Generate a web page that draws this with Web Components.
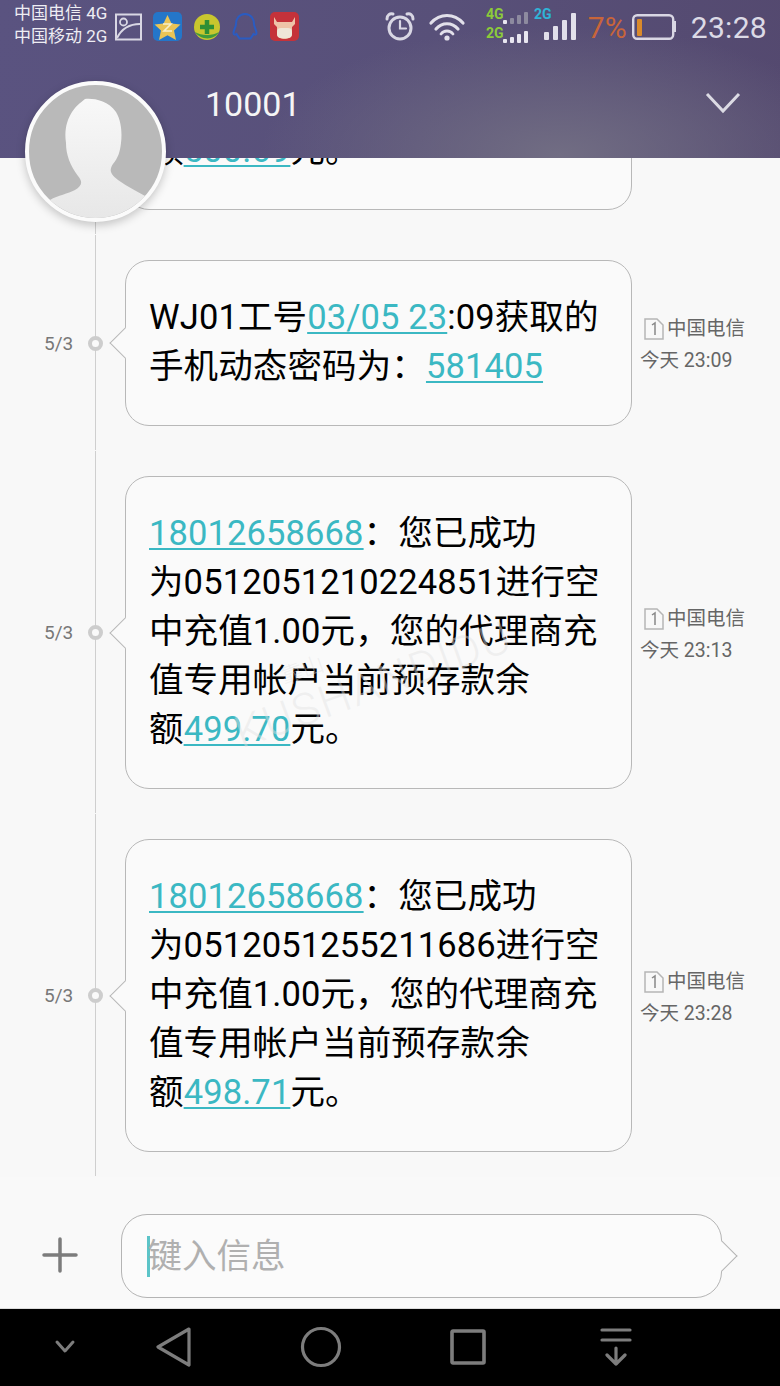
<!DOCTYPE html>
<html lang="zh-CN">
<head>
<meta charset="utf-8">
<title>10001</title>
<style>
html,body{margin:0;padding:0;background:#f8f8f8}
body{font-family:Roboto,"Noto Sans CJK SC",sans-serif}
</style>
</head>
<body>
<phone-app>
  <sms-header title-text="10001"></sms-header>
  <sms-thread>
    <sms-row partial><sms-bubble>额<sms-link>500.69</sms-link>元。</sms-bubble></sms-row>
    <sms-row date="5/3" time="今天 23:09"><sms-bubble>WJ01工号<sms-link>03/05 23</sms-link>:09获取的<br>手机动态密码为：<sms-link>581405</sms-link></sms-bubble></sms-row>
    <sms-row date="5/3" time="今天 23:13"><sms-bubble><sms-link>18012658668</sms-link>：您已成功<br>为0512051210224851进行空<br>中充值1.00元，您的代理商充<br>值专用帐户当前预存款余<br>额<sms-link>499.70</sms-link>元。</sms-bubble></sms-row>
    <sms-row date="5/3" time="今天 23:28"><sms-bubble><sms-link>18012658668</sms-link>：您已成功<br>为0512051255211686进行空<br>中充值1.00元，您的代理商充<br>值专用帐户当前预存款余<br>额<sms-link>498.71</sms-link>元。</sms-bubble></sms-row>
  </sms-thread>
  <composer-bar placeholder="键入信息"></composer-bar>
  <nav-bar></nav-bar>
  <contact-avatar></contact-avatar>
  <water-mark></water-mark>
</phone-app>
<script>
const FONT = 'Roboto,"Noto Sans CJK SC",sans-serif';
function def(name, html, init){
  customElements.define(name, class extends HTMLElement{
    constructor(){
      super();
      const r = this.attachShadow({mode:'open'});
      r.innerHTML = html;
    }
    connectedCallback(){ if(init) init(this, this.shadowRoot); }
  });
}

def('phone-app', `<style>
:host{display:flex;flex-direction:column;position:relative;width:780px;height:1386px;overflow:hidden;background:#f8f8f8;font-family:${FONT}}
</style><slot></slot>`);

def('status-bar', `<style>
:host{display:flex;height:52px;align-items:flex-start;color:#e8e6f0}
svg{display:block;flex:none}
.car{margin:2px 0 0 14px;width:94px;font-size:17px;line-height:23px;white-space:nowrap;color:#eeedf3}
.r{margin-left:auto;display:flex;align-items:flex-start}
.pct{font-size:30px;line-height:56px;color:#c8653a;width:44px;margin-left:2px;}
.time{font-size:30px;line-height:56px;color:#dcdae6;margin:0 13px 0 15px;letter-spacing:.3px}
</style>
<div class="car">中国电信 4G<br>中国移动 2G</div>
<svg width="192" height="52" viewBox="108 0 192 52" fill="none">
  <rect x="116" y="14.5" width="25" height="25" stroke="#d9d7e4" stroke-width="2"/>
  <circle cx="123.500" cy="22" r="3.500" stroke="#d9d7e4" stroke-width="1.800"/>
  <path d="M117 38C121 30 129 24 140 24" stroke="#d9d7e4" stroke-width="2"/>
  <rect x="153" y="12" width="29" height="29" rx="5" fill="#2476c9"/>
  <path d="M167.500 15l4 8.500 9 1-6.500 6 2 9.500-8.500-4.700-8.500 4.700 2-9.500-6.500-6 9-1z" fill="#e9c456"/>
  <path d="M163 24h8l-7 7h8" stroke="#f6eecb" stroke-width="1.600"/>
  <circle cx="207" cy="27" r="13" fill="#c9c62e"/>
  <path d="M195 32C200 40 214 41 219 32C213 36 201 36 195 32Z" fill="#3f9a3c"/>
  <path d="M207 20v14M200 27h14" stroke="#2f8f35" stroke-width="4.500"/>
  <path d="M245 14c-6 0-9 5-9 10 0 3-2.500 6-2.500 9 0 2 1.500 2 3 1 1 2 3 4 3 4.500h11c0-.5 2-2.500 3-4.500 1.500 1 3 1 3-1 0-3-2.500-6-2.500-9 0-5-3-10-9-10z" stroke="#2a5cc2" stroke-width="2"/>
  <rect x="270" y="12" width="29" height="29" rx="5" fill="#c5323a"/>
  <path d="M274 17l3 5h15l3-5 0 7-3 3v7c0 3-4 5-7.500 5s-7.500-2-7.500-5v-7l-3-3z" fill="#eec3a8"/>
  <rect x="277" y="28" width="15" height="10" rx="4" fill="#efe6d8"/>
</svg>
<div class="r">
<svg width="202" height="52" viewBox="384 0 202 52" fill="none" stroke-linecap="round">
  <circle cx="400" cy="28" r="11" stroke="#d9d7e4" stroke-width="3"/>
  <path d="M400 21v7.500h6" stroke="#d9d7e4" stroke-width="2.200"/>
  <path d="M387 19c0-4 3-6 6-5M413 19c0-4-3-6-6-5" stroke="#d9d7e4" stroke-width="3"/>
  <path d="M431 23C440 13 454 13 463 23" stroke="#e2e0ea" stroke-width="3.200"/>
  <path d="M436 29C442 22 452 22 458 29" stroke="#e2e0ea" stroke-width="3.200"/>
  <path d="M441 34C444 30 450 30 453 34" stroke="#e2e0ea" stroke-width="2.800"/>
  <circle cx="447" cy="38" r="2.600" fill="#e2e0ea"/>
  <text x="486" y="19" font-family="Roboto,sans-serif" font-size="14" font-weight="700" fill="#8ccb3a" stroke="none">4G</text>
  <text x="486" y="38" font-family="Roboto,sans-serif" font-size="14" font-weight="700" fill="#8ccb3a" stroke="none">2G</text>
  <text x="534" y="19" font-family="Roboto,sans-serif" font-size="14" font-weight="700" fill="#2fb4d8" stroke="none">2G</text>
  <g fill="#8d8a9f"><rect x="503" y="20" width="4" height="4" rx="1" fill="#e8e6f0"/><rect x="510" y="18" width="4" height="6" rx="1"/><rect x="517" y="15" width="4" height="9" rx="1"/><rect x="524" y="12" width="4" height="12" rx="1"/></g>
  <g fill="#e8e6f0"><rect x="503" y="39" width="4" height="4" rx="1"/><rect x="510" y="37" width="4" height="6" rx="1"/><rect x="517" y="34" width="4" height="9" rx="1"/><rect x="524" y="31" width="4" height="12" rx="1"/></g>
  <g fill="#e2e0ea"><rect x="544" y="32" width="5" height="8" rx="1"/><rect x="553" y="26" width="5" height="14" rx="1"/><rect x="562" y="20" width="5" height="20" rx="1"/><rect x="571" y="13" width="5" height="27" rx="1"/></g>
</svg>
<div class="pct">7%</div>
<svg width="44" height="52" viewBox="632 0 44 52" fill="none">
  <rect x="633.200" y="15.200" width="40" height="23.600" rx="4" stroke="#d9d7e4" stroke-width="2.400"/>
  <rect x="674" y="21" width="2" height="11" fill="#d9d7e4"/>
  <rect x="637" y="19" width="5" height="17" rx="1" fill="#d98a2b"/>
</svg>
<div class="time">23:28</div>
</div>`);

def('sms-header', `<style>
:host{display:block;flex:none;height:158px;position:relative;z-index:2;
 background:radial-gradient(ellipse 300px 130px at 560px 155px,#716d83 0%,rgba(113,109,131,0) 100%),linear-gradient(100deg,#5a5380,#585079 55%,#54496f)}
.t{display:flex;align-items:center;box-sizing:border-box;height:106px;padding:0 39px 2px 205px;color:#f5f5f5;font-size:34px}
.t span{flex:1}
svg{display:block;margin-top:-2px}
</style>
<status-bar></status-bar>
<div class="t"><span id="t"></span>
<svg width="36" height="24" viewBox="0 0 36 24" fill="none"><path d="M2 3L18 20L34 3" stroke="#dcdbe4" stroke-width="3"/></svg></div>`,
(h,r)=>{ r.getElementById('t').textContent = h.getAttribute('title-text'); });

def('sms-thread', `<style>
:host{display:flex;flex-direction:column;justify-content:flex-end;flex:none;height:1019px;overflow:hidden;background:#f8f8f8}
</style><slot></slot>`);

def('sms-link', `<style>
:host{display:inline;color:#3bb8c3;text-decoration:underline;text-decoration-thickness:2px;text-underline-offset:3px}
</style><slot></slot>`);

def('sms-bubble', `<style>
:host{display:block;position:relative;box-sizing:border-box;width:507px;margin:25px 0;padding:32px 20px 34px 23px;
 background:#fafafa;border:1px solid #b8b8b8;border-radius:24px;color:#000;font-size:34.500px;line-height:49px;white-space:nowrap;letter-spacing:.12px}
.tail{position:absolute;left:-12px;top:50%;width:22px;height:22px;margin-top:-11px;box-sizing:border-box;background:#fafafa;
 border-left:1px solid #b8b8b8;border-bottom:1px solid #b8b8b8;transform:rotate(45deg)}
:host([notail]) .tail{display:none}
</style><div class="tail"></div><slot></slot>`);

def('sms-row', `<style>
:host{display:grid;grid-template-columns:125px 507px 1fr;flex:none;background:linear-gradient(#cfcfcf,#cfcfcf) 95px 0/1px calc(100% - 1px) no-repeat}
.d{display:flex;align-items:center;padding-left:44px;color:#777;font-size:19px;box-sizing:border-box}
.d span{width:44px}
.dot{width:15px;height:15px;box-sizing:border-box;border:4px solid #cdcdcd;border-radius:50%;background:#fafafa}
.m{align-self:center;padding:4px 0 0 8px;color:#666;font-size:19.500px;line-height:32px;white-space:nowrap}
.s{display:flex;align-items:center;}
svg{display:block;margin:0 3px 0 4px}
</style>
<div class="d"><span id="date"></span><div class="dot"></div></div>
<slot></slot>
<div class="m"><div class="s"><svg width="20" height="22" viewBox="0 0 20 22" fill="none"><path d="M1 1h12l6 6v14H1z" stroke="#b5b5b5" stroke-width="1.500"/><path d="M8 7l3-2v12" stroke="#888" stroke-width="1.500"/></svg><span id="sim">中国电信</span></div><div id="time"></div></div>`,
(h,r)=>{
  if(h.hasAttribute('partial')){
    r.querySelector('.m').remove(); r.querySelector('.d').innerHTML='';
    h.querySelector('sms-bubble').setAttribute('notail','');
    return;
  }
  r.getElementById('date').textContent = h.getAttribute('date');
  r.getElementById('time').textContent = h.getAttribute('time');
});

def('composer-bar', `<style>
:host{display:flex;flex:none;box-sizing:border-box;height:132px;padding:37px 0 0 42px;background:#f9f9f9;border-bottom:1px solid #dcdcdc}
svg{display:block;margin:23px 43px 0 0;flex:none}
.i{position:relative;box-sizing:border-box;width:601px;height:84px;border:1px solid #b4b4b4;border-radius:26px;background:#fbfbfb;
 display:flex;align-items:center;padding-left:25px}
.tail{position:absolute;right:-12px;top:50%;width:22px;height:22px;margin-top:-11px;box-sizing:border-box;background:#fbfbfb;
 border-right:1px solid #b4b4b4;border-top:1px solid #b4b4b4;transform:rotate(45deg)}
.c{width:2.500px;height:41px;background:#5cc4c8;flex:none}
.p{font-size:34.500px;line-height:41px;color:#b0b0b0;margin-left:-2px}
</style>
<svg width="36" height="36" viewBox="0 0 36 36" fill="none" stroke="#7c7c7c" stroke-width="3.500" stroke-linecap="round"><path d="M18 2v32M2 18h32"/></svg>
<div class="i"><div class="tail"></div><div class="c"></div><div class="p" id="p"></div></div>`,
(h,r)=>{ r.getElementById('p').textContent = h.getAttribute('placeholder'); });

def('nav-bar', `<style>
:host{display:flex;flex:none;height:77px;align-items:center;background:#000;padding-left:54px}
svg{display:block;flex:none}
</style>
<svg width="22" height="16" viewBox="0 0 22 16" fill="none" stroke="#7d7d7d" stroke-width="3" stroke-linecap="round" stroke-linejoin="round" style="margin-right:80px;margin-top:-1px"><path d="M3 3l8 9 8-9" /></svg>
<svg width="36" height="40" viewBox="0 0 36 40" fill="none" stroke="#7d7d7d" stroke-width="3.200" stroke-linejoin="round" style="margin-right:108px;margin-top:-1px"><path d="M33 2L2 20L33 38Z"/></svg>
<svg width="42" height="42" viewBox="0 0 42 42" fill="none" stroke="#7d7d7d" stroke-width="3.200" style="margin-right:108px;margin-top:-1px"><circle cx="21" cy="21" r="18.500"/></svg>
<svg width="36" height="36" viewBox="0 0 36 36" fill="none" stroke="#7d7d7d" stroke-width="3.600" stroke-linejoin="round" style="margin-right:114px;margin-top:-1px"><rect x="2" y="2" width="32" height="32" rx="1"/></svg>
<svg width="32" height="38" viewBox="0 0 32 38" fill="none" stroke="#7d7d7d" stroke-width="3.200" stroke-linecap="round" stroke-linejoin="round" style="margin-top:-1px"><path d="M2 2h28M2 12h28M16 20v16M7 27l9 9 9-9"/></svg>`);

def('contact-avatar', `<style>
:host{display:block;position:absolute;z-index:3;left:25px;top:81px;width:141px;height:141px;box-sizing:border-box;border:4px solid #fbfbfb;border-radius:50%;overflow:hidden;background:#b9b9b9;box-shadow:0 3px 10px rgba(0,0,0,.22)}
svg{display:block;position:absolute;left:-4px;top:-4px}
</style>
<svg width="141" height="141" viewBox="25 81 141 141"><defs><linearGradient id="g" x1="0" y1="0" x2="0" y2="1"><stop offset="0" stop-color="#f8f8f8"/><stop offset="1" stop-color="#e4e4e4"/></linearGradient></defs>
<path fill="url(#g)" d="M85 99C92 98 108 100 116 112C122 122 122 135 121 143C120 152 118 158 113 164C109 170 110 174 118 180C128 187 138 192 147 197L160 240L40 240L50 200C58 195 68 194 75 190C82 186 83 182 78 176C70 165 66 155 66 143C64 130 67 120 72 112C76 106 80 103 85 99Z"/></svg>`);

def('water-mark', `<style>
:host{display:block;position:absolute;z-index:1;left:245px;top:684px;width:320px;pointer-events:none;transform:rotate(-20deg);transform-origin:left bottom;color:rgba(225,225,225,.45);white-space:nowrap;font-weight:300}
.a{font-size:22px;line-height:24px;padding-left:62px}
.b{font-size:44px;line-height:50px;letter-spacing:2px}
</style><div class="a">靠山</div><div class="b">KUSHANDIDU</div>`);
</script>
</body>
</html>
